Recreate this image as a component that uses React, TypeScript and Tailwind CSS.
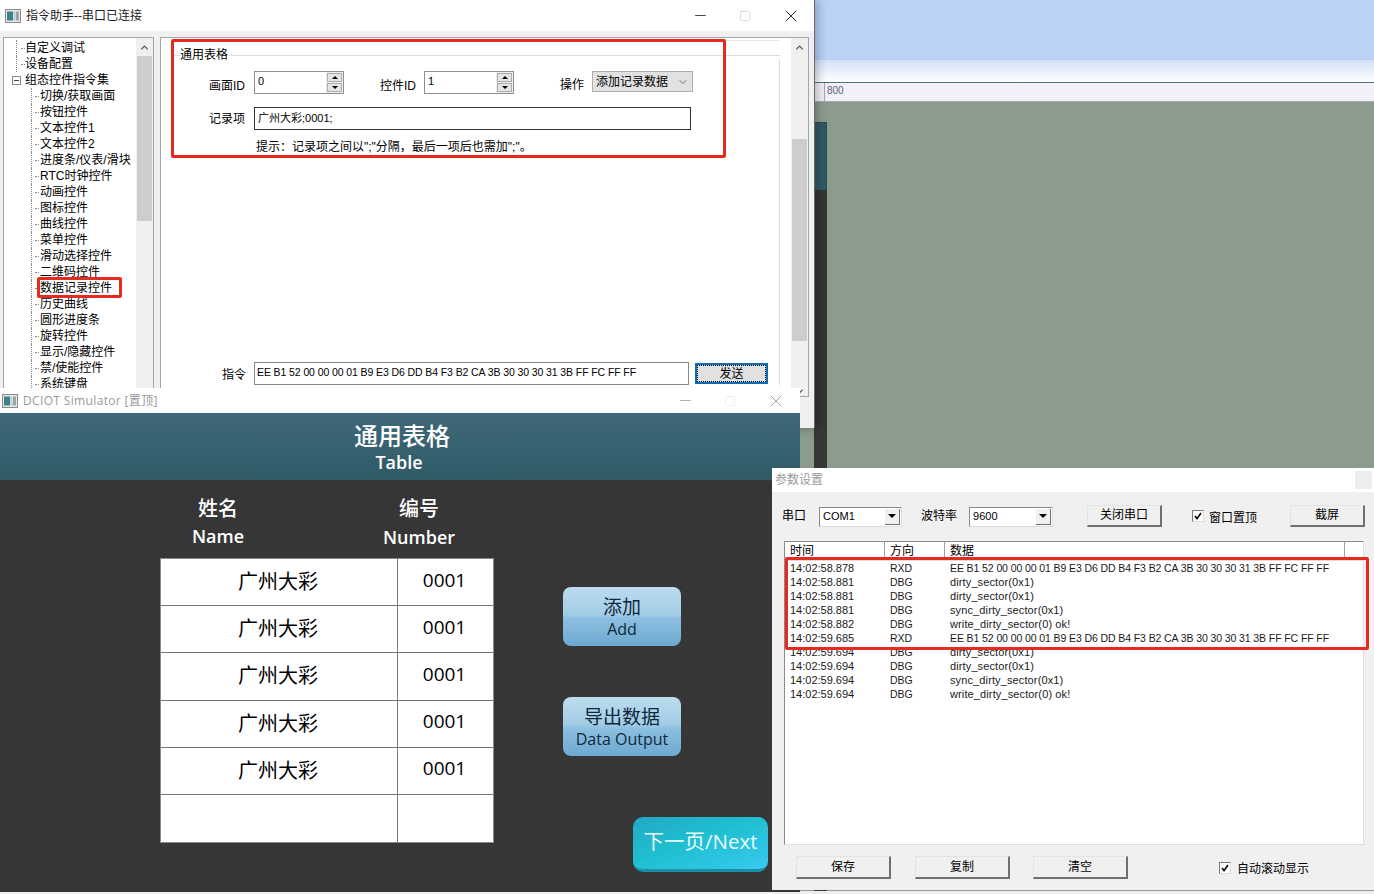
import { Minus, Square, X, ChevronUp, ChevronDown } from "lucide-react";

const cjk = "font-['Liberation_Sans','Noto_Sans_CJK_SC',sans-serif]";
const sim = "font-['Open_Sans','Noto_Sans_CJK_SC',sans-serif]";

const treeItems = [
  "切换/获取画面", "按钮控件", "文本控件1", "文本控件2", "进度条/仪表/滑块", "RTC时钟控件",
  "动画控件", "图标控件", "曲线控件", "菜单控件", "滑动选择控件", "二维码控件",
  "数据记录控件", "历史曲线", "圆形进度条", "旋转控件", "显示/隐藏控件", "禁/使能控件", "系统键盘",
];

const hex = "EE B1 52 00 00 00 01 B9 E3 D6 DD B4 F3 B2 CA 3B 30 30 30 31 3B FF FC FF FF";

const logRows = [
  ["14:02:58.878", "RXD", hex],
  ["14:02:58.881", "DBG", "dirty_sector(0x1)"],
  ["14:02:58.881", "DBG", "dirty_sector(0x1)"],
  ["14:02:58.881", "DBG", "sync_dirty_sector(0x1)"],
  ["14:02:58.882", "DBG", "write_dirty_sector(0) ok!"],
  ["14:02:59.685", "RXD", hex],
  ["14:02:59.694", "DBG", "dirty_sector(0x1)"],
  ["14:02:59.694", "DBG", "dirty_sector(0x1)"],
  ["14:02:59.694", "DBG", "sync_dirty_sector(0x1)"],
  ["14:02:59.694", "DBG", "write_dirty_sector(0) ok!"],
];

const AppIcon = () => (
  <svg width="16" height="14" viewBox="0 0 16 14" className="shrink-0">
    <rect x="0.5" y="0.5" width="15" height="13" fill="#e8e8e8" stroke="#8a8a8a" />
    <rect x="2" y="2.5" width="6" height="9" fill="#3f7f86" />
    <rect x="8" y="2.5" width="3" height="9" fill="#c7d6da" />
    <rect x="11" y="2.5" width="3" height="9" fill="#9aa4a8" />
  </svg>
);

const Spinner = ({ value }: { value: string }) => (
  <div className="flex h-[23px] w-[90px] border border-[#8f8f8f] bg-white">
    <span className="flex-1 pl-[3px] text-[11px] leading-[19px]">{value}</span>
    <div className="flex w-[17px] flex-col gap-px bg-[#eeeeee] p-px">
      <div className="flex flex-1 items-center justify-center border border-[#adadad] bg-[#e4e4e4]">
        <div className="h-0 w-0 border-x-[3px] border-b-[3px] border-x-transparent border-b-black" />
      </div>
      <div className="flex flex-1 items-center justify-center border border-[#adadad] bg-[#e4e4e4]">
        <div className="h-0 w-0 border-x-[3px] border-t-[3px] border-x-transparent border-t-black" />
      </div>
    </div>
  </div>
);

const Combo = ({ value, width }: { value: string; width: string }) => (
  <div className={`flex h-[20px] items-center border border-[#8a8a8a] border-b-[#dcdcdc] border-r-[#dcdcdc] bg-white ${width}`}>
    <span className="flex-1 pl-[3px] text-[11px]">{value}</span>
    <div className="mr-px flex h-[16px] w-[15px] items-center justify-center border-r border-b border-[#6e6e6e] bg-[#f0f0f0]">
      <div className="h-0 w-0 border-x-[4px] border-t-[4px] border-x-transparent border-t-black" />
    </div>
  </div>
);

const Win95Button = ({ label, width, height = "h-[23px]" }: { label: string; width: string; height?: string }) => (
  <div className={`flex items-center justify-center border border-[#e4e4e4] border-r-2 border-b-2 border-r-[#6f6f6f] border-b-[#6f6f6f] bg-[#f0f0f0] text-[12px] ${width} ${height}`}>
    {label}
  </div>
);

const Check = () => (
  <div className="flex h-[12px] w-[12px] items-center justify-center border border-[#7a7a7a] border-r-[#dddddd] border-b-[#dddddd] bg-white">
    <svg width="8" height="8" viewBox="0 0 8 8">
      <path d="M1 4 L3 6.5 L7 1" fill="none" stroke="#111" strokeWidth="1.7" />
    </svg>
  </div>
);

const TealButton = ({ zh, en }: { zh: string; en: string }) => (
  <div className="flex h-[59px] w-[118px] flex-col items-center justify-center rounded-[8px] bg-[linear-gradient(#bcdcef_0%,#a3cde6_46%,#8cbfe0_54%,#6ea9d0_100%)] pt-[3px] text-[#10283c]">
    <span className="text-[19px] leading-[23px]">{zh}</span>
    <span className="text-[16px] leading-[21px]">{en}</span>
  </div>
);

const Annotation = ({ className }: { className: string }) => (
  <div className={`absolute rounded-[2px] border-[3px] border-[#e62a20] ${className}`} />
);

const TreeTop = ({ label }: { label: string }) => (
  <div className="flex h-[16px] items-center">
    <div className="ml-[12px] h-full w-[5px] border-l border-dotted border-[#888]" />
    <div className="w-[4px] border-t border-dotted border-[#888]" />
    <span className="whitespace-nowrap leading-[16px]">{label}</span>
  </div>
);

const CommandWindow = () => (
  <div className={`absolute left-0 top-0 flex h-[428px] w-[815px] flex-col border-r border-[#6a6a6a] bg-[#f0f0f0] text-black shadow-[2px_0_10px_rgba(0,0,0,0.3)] ${cjk}`}>
    <div className="flex h-[31px] items-center bg-white pl-[5px] text-[12px]">
      <AppIcon />
      <span className="ml-[5px] text-[#222]">指令助手--串口已连接</span>
      <div className="ml-auto flex items-center gap-[30px] pr-[13px]">
        <Minus size={17} strokeWidth={1} />
        <Square size={12} strokeWidth={1} className="text-[#bbbbbb]" />
        <X size={20} strokeWidth={1} />
      </div>
    </div>
    <div className="mt-[6px] flex flex-1 gap-[6px] pl-[3px] pr-[5px]">
      <div className="flex h-[360px] w-[151px] overflow-hidden border border-[#a5a5a5] bg-white">
        <div className="flex-1 pt-[2px] text-[12px]">
          <TreeTop label="自定义调试" />
          <TreeTop label="设备配置" />
          <div className="flex h-[16px] items-center">
            <div className="ml-[8px] flex h-[9px] w-[9px] items-center justify-center border border-[#8a8a8a]">
              <div className="h-px w-[5px] bg-[#444]" />
            </div>
            <span className="ml-[4px] whitespace-nowrap leading-[16px]">组态控件指令集</span>
          </div>
          {treeItems.map((item) => (
            <div key={item} className="flex h-[16px] items-center">
              <div className="ml-[27px] h-full w-[4px] border-l border-dotted border-[#888]" />
              <div className="w-[4px] border-t border-dotted border-[#888]" />
              <span className="ml-px whitespace-nowrap leading-[16px]">{item}</span>
            </div>
          ))}
        </div>
        <div className="flex w-[17px] shrink-0 flex-col bg-[#f0f0f0]">
          <div className="flex h-[18px] items-center justify-center">
            <ChevronUp size={11} strokeWidth={3} className="text-[#555]" />
          </div>
          <div className="mx-px h-[165px] bg-[#cdcdcd]" />
        </div>
      </div>

      <div className="flex h-[360px] flex-1 overflow-hidden border border-[#a5a5a5] bg-white">
        <div className="flex-1 pl-[12px] pt-[2px]">
          <div className="h-px w-[607px] bg-[#e6e6e6]" />
          <div className="mt-[10px] flex h-[8px] w-[607px] items-center">
            <div className="w-[7px] border-t border-[#dddddd]" />
            <span className="pr-px text-[12px]">通用表格</span>
            <div className="flex-1 border-t border-[#dddddd]" />
          </div>
          <div className="flex h-[326px] w-[607px] flex-col border-r border-[#dddddd]">
            <div className="mt-[12px] flex items-start text-[12px]">
              <span className="mt-[6px] w-[72px] text-right">画面ID</span>
              <div className="ml-[9px]"><Spinner value="0" /></div>
              <span className="ml-[36px] mt-[6px] w-[36px]">控件ID</span>
              <div className="ml-[8px]"><Spinner value="1" /></div>
              <span className="ml-[46px] mt-[5px]">操作</span>
              <div className="ml-[8px] flex h-[21px] w-[101px] items-center border border-[#adadad] bg-[#e1e1e1] pl-[3px]">
                <span className="flex-1">添加记录数据</span>
                <ChevronDown size={12} strokeWidth={1.4} className="mr-[3px] text-[#444]" />
              </div>
            </div>
            <div className="mt-[12px] flex items-center text-[12px]">
              <span className="w-[72px] text-right">记录项</span>
              <div className="ml-[9px] flex h-[23px] w-[437px] items-center border border-[#333] pl-[3px] text-[11px]">广州大彩;0001;</div>
            </div>
            <div className="ml-[83px] mt-[8px] text-[12px] leading-[18px]">提示：记录项之间以";"分隔，最后一项后也需加";"。</div>
            <div className="mt-auto flex items-center text-[12px]">
              <span className="mt-[2px] w-[73px] text-right">指令</span>
              <div className="ml-[8px] flex h-[23px] w-[435px] items-center border border-[#8a8a8a] pb-px pl-[2px] text-[10.5px] tracking-[-0.1px]">{hex}</div>
              <div className="ml-[6px] flex h-[21px] w-[73px] items-center justify-center border-2 border-[#0a6cb5] bg-[#e1e1e1]">
                <div className="flex h-full w-full items-center justify-center border border-dotted border-black">发送</div>
              </div>
            </div>
          </div>
        </div>
        <div className="flex w-[17px] shrink-0 flex-col bg-[#f0f0f0]">
          <div className="flex h-[18px] items-center justify-center">
            <ChevronUp size={11} strokeWidth={3} className="text-[#555]" />
          </div>
          <div className="mx-px mt-[83px] h-[202px] bg-[#cdcdcd]" />
          <div className="mt-auto flex h-[10px] items-center justify-center">
            <ChevronDown size={11} strokeWidth={3} className="text-[#555]" />
          </div>
        </div>
      </div>
    </div>
  </div>
);

const SimulatorWindow = () => (
  <div className={`absolute left-0 top-[388px] flex h-[504px] w-[800px] flex-col bg-[#363636] ${sim}`}>
    <div className="flex h-[25px] items-center bg-white pl-[2px] text-[12px] text-[#9a9a9a]">
      <AppIcon />
      <span className="ml-[5px] tracking-[0.35px]">DCIOT Simulator [置顶]</span>
      <div className="ml-auto flex items-center gap-[30px] pr-[14px] text-[#8f8f8f]">
        <Minus size={17} strokeWidth={1} />
        <Square size={12} strokeWidth={1} className="text-[#dddddd]" />
        <X size={20} strokeWidth={1} />
      </div>
    </div>
    <div className="flex h-[67px] flex-col items-center bg-[linear-gradient(#3f6979,#2f5a66)] pl-[4px] pt-[7px] text-white">
      <span className="text-[24px] font-medium leading-[32px]">通用表格</span>
      <span className="-ml-[6px] -mt-[2px] text-[18px] font-semibold leading-[24px]">Table</span>
    </div>
    <div className="flex flex-1 pl-[160px]">
      <div className="w-[334px]">
        <div className="flex h-[78px] pt-[15px] text-white">
          <div className="flex w-[116px] flex-col items-center">
            <span className="text-[20px] font-medium leading-[28px]">姓名</span>
            <span className="text-[18px] font-semibold leading-[27px]">Name</span>
          </div>
          <div className="ml-[85px] flex w-[116px] flex-col items-center">
            <span className="text-[20px] font-medium leading-[28px]">编号</span>
            <span className="text-[18px] font-semibold leading-[28px]">Number</span>
          </div>
        </div>
        <div className="grid h-[285px] grid-cols-[237px_1fr] grid-rows-6 border border-[#8a8a8a] bg-white text-black">
          {[0, 1, 2, 3, 4, 5].map((i) => (
            <div key={i} className="contents">
              <div className={`flex items-center justify-center border-r border-[#777] pr-[2px] text-[20px] ${i < 5 ? "border-b" : ""}`}>
                {i < 5 ? "广州大彩" : ""}
              </div>
              <div className={`flex items-center justify-center border-[#777] pb-[4px] pr-[2px] text-[19px] ${i < 5 ? "border-b" : ""}`}>
                {i < 5 ? "0001" : ""}
              </div>
            </div>
          ))}
        </div>
      </div>
      <div className="ml-[69px] flex w-[205px] flex-col">
        <div className="mt-[107px]"><TealButton zh="添加" en="Add" /></div>
        <div className="mt-[51px]"><TealButton zh="导出数据" en="Data Output" /></div>
        <div className="mt-[61px] flex h-[55px] w-[135px] items-center justify-center self-end rounded-[10px] border-b-[3px] border-[#1a8fa8] bg-[linear-gradient(160deg,#22a8c4,#1fbfd0_45%,#38c9f0)] pb-[3px] text-[20.5px] text-[#e8fbff]">
          下一页/Next
        </div>
      </div>
    </div>
  </div>
);

const SettingsWindow = () => (
  <div className={`absolute left-[772px] top-[468px] flex h-[422px] w-[602px] flex-col bg-[#f0f0f0] text-black ${cjk}`}>
    <div className="flex h-[24px] items-center bg-white pl-[3px] text-[12px] text-[#999]">
      参数设置
      <div className="ml-auto mr-[2px] h-[18px] w-[17px] bg-[#eeeeee]" />
    </div>
    <div className="mt-[13px] flex h-[21px] items-center pl-[10px] text-[12px]">
      <span>串口</span>
      <div className="ml-[13px] mt-[2px]"><Combo value="COM1" width="w-[83px]" /></div>
      <span className="ml-[19px]">波特率</span>
      <div className="ml-[12px] mt-[2px]"><Combo value="9600" width="w-[84px]" /></div>
      <div className="ml-[34px]"><Win95Button label="关闭串口" width="w-[75px]" height="h-[22px]" /></div>
      <div className="ml-[30px]"><Check /></div>
      <span className="ml-[5px] mt-[4px]">窗口置顶</span>
      <div className="ml-[33px]"><Win95Button label="截屏" width="w-[75px]" height="h-[22px]" /></div>
    </div>
    <div className="ml-[12px] mt-[15px] flex h-[304px] w-[580px] flex-col border border-[#8a8a8a] border-r-[#dddddd] border-b-[#dddddd] bg-white">
      <div className="flex h-[19px] border-b border-[#dddddd] text-[12px]">
        <div className="w-[100px] border-r border-[#a0a0a0] pl-[5px]">时间</div>
        <div className="w-[60px] border-r border-[#a0a0a0] pl-[5px]">方向</div>
        <div className="w-[400px] border-r border-[#a0a0a0] pl-[5px]">数据</div>
      </div>
      <div className="text-[#1a1a1a]">
        {logRows.map((row, i) => (
          <div key={i} className="flex h-[14px] items-center whitespace-nowrap leading-[14px]">
            <span className="w-[105px] pl-[5px] text-[11px]">{row[0]}</span>
            <span className="w-[60px] text-[10.5px]">{row[1]}</span>
            <span className={row[2] === hex ? "text-[10.5px] tracking-[-0.1px]" : "text-[11px] tracking-[0.12px]"}>{row[2]}</span>
          </div>
        ))}
      </div>
    </div>
    <div className="mt-[11px] flex items-center pl-[24px] text-[12px]">
      <Win95Button label="保存" width="w-[95px]" />
      <div className="ml-[24px]"><Win95Button label="复制" width="w-[95px]" /></div>
      <div className="ml-[23px]"><Win95Button label="清空" width="w-[95px]" /></div>
      <div className="ml-[91px]"><Check /></div>
      <span className="ml-[6px] mt-[3px]">自动滚动显示</span>
    </div>
  </div>
);

export default function App() {
  return (
    <div className="relative flex h-[894px] w-[1374px] flex-col overflow-hidden bg-[#8b9c8d]">
      <div className="h-[60px] bg-[#b9d2f6]" />
      <div className="h-[22px] bg-[linear-gradient(#d3e1f8,#ffffff)]" />
      <div className="flex h-[20px] border-y border-t-[#4f7474] border-b-[#a3a8c0] bg-[#f2f1f9] pl-[824px] font-['Liberation_Sans',sans-serif] text-[10px] leading-[16px] text-[#55607a]">
        <span className="border-l border-[#a3a8c0] pl-[2px]">800</span>
      </div>
      <div className="flex-1" />
      <div className="absolute left-[814px] top-[122px] h-[68px] w-[13px] border-t border-r border-[#2a4a55] bg-[#2f5a68]" />
      <div className="absolute left-[814px] top-[190px] h-[704px] w-[13px] bg-[#363636]" />
      <div className="absolute bottom-0 left-0 h-[3px] w-full bg-[#eeeeee]" />
      <CommandWindow />
      <SimulatorWindow />
      <SettingsWindow />
      <Annotation className="left-[171px] top-[39px] h-[119px] w-[555px]" />
      <Annotation className="left-[37px] top-[277px] h-[21px] w-[85px]" />
      <Annotation className="left-[785px] top-[557px] h-[93px] w-[584px]" />
    </div>
  );
}
